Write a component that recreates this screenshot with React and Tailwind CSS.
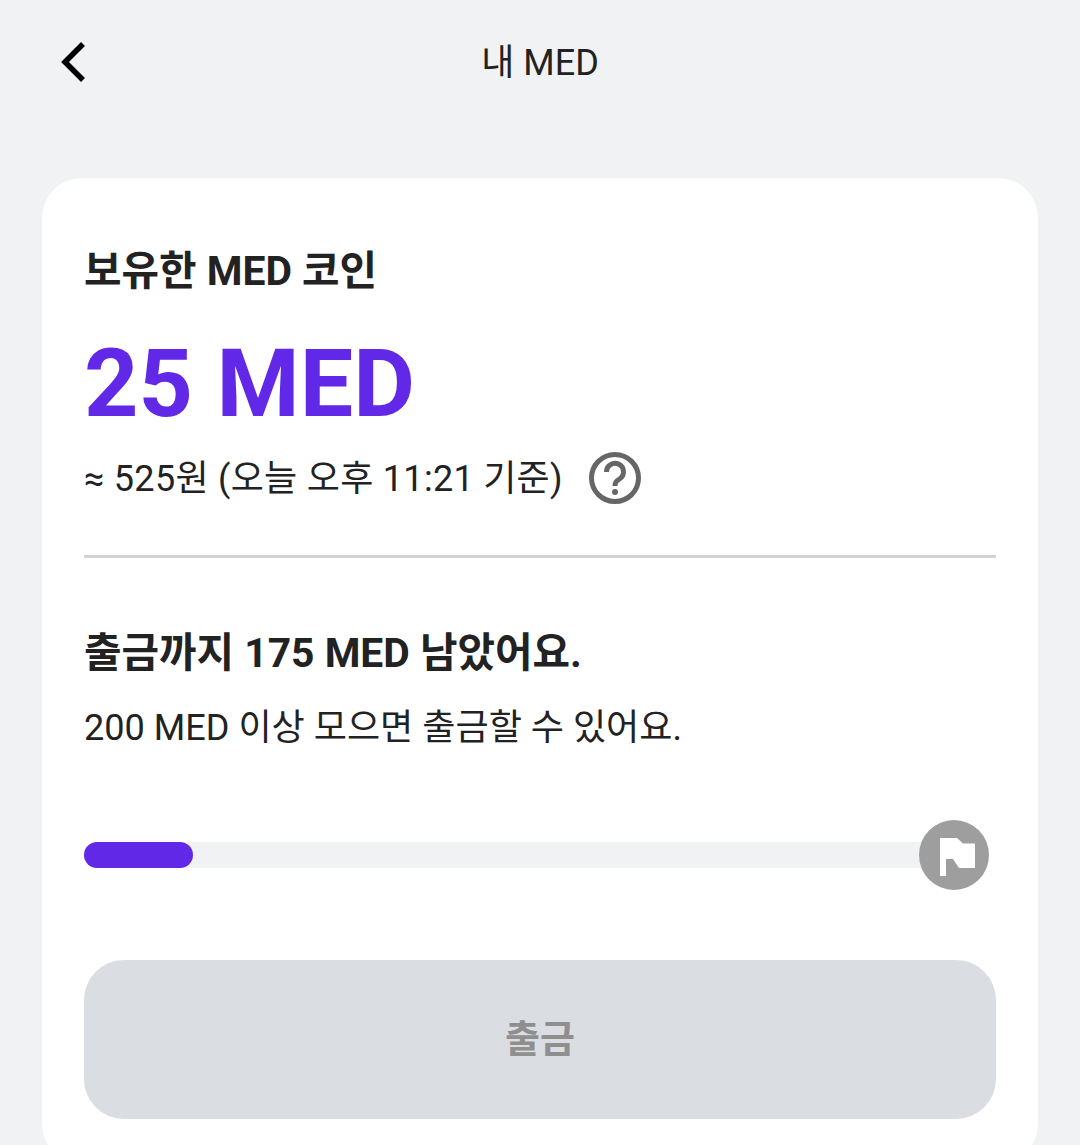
export default function App() {
  return (
    <div className="h-[1145px] overflow-hidden bg-[#f1f2f4] font-['Roboto','Noto_Sans_CJK_KR',sans-serif] text-[#222222]">
      <header className="h-[178px] relative">
        <div className="h-[126px] flex items-center justify-center text-[36px] leading-none">내 MED</div>
        <svg className="absolute left-[58px] top-[40px]" width="32" height="44" viewBox="0 0 32 44" fill="none">
          <path d="M25 4 L7 22 L25 40" stroke="#000" strokeWidth="5.5" />
        </svg>
      </header>
      <main className="mx-[42px] h-[986px] rounded-[40px] bg-white px-[42px] pt-[70px]">
        <h2 className="text-[40.8px] font-bold leading-[46px]">보유한 MED 코인</h2>
        <div className="mt-[40px] text-[95px] font-bold leading-[100px] text-[#6128e8]">25 MED</div>
        <div className="mt-[19px] flex items-center gap-[26px]">
          <span className="text-[36px] tracking-[0.3px] leading-[52px]">≈ 525원 (오늘 오후 11:21 기준)</span>
          <svg className="-translate-y-[1px]" width="52" height="52" viewBox="0 0 52 52" fill="none">
            <circle cx="26" cy="26" r="23.5" stroke="#666" strokeWidth="5" />
            <path d="M17.5 20 a8.5 8.5 0 1 1 13 7 c-3 2 -4.5 3 -4.5 7" stroke="#666" strokeWidth="5" />
            <circle cx="26" cy="40" r="3" fill="#666" />
          </svg>
        </div>
        <div className="mt-[50px] h-[3px] bg-[#d2d3d5]" />
        <h3 className="mt-[72px] text-[40.8px] font-bold leading-[46px]">출금까지 175 MED 남았어요.</h3>
        <p className="mt-[29px] text-[36.1px] leading-[46px]">200 MED 이상 모으면 출금할 수 있어요.</p>
        <div className="relative mt-[91px] h-[26px] w-[870px] rounded-full bg-[#f1f2f4]">
          <div className="h-full w-[109px] rounded-full bg-[#6128e8]" />
          <div className="absolute right-0 top-[-22px] flex h-[70px] w-[70px] translate-x-[35px] items-center justify-center rounded-full bg-[#9e9e9e]">
            <svg className="translate-x-[3px] translate-y-[2px]" width="35" height="38" viewBox="0 0 35 38"><path d="M0 0 H17 L23 5.5 H35 V30 H19 L13 21 H6 V38 H0 Z" fill="#fff" /></svg>
          </div>
        </div>
        <button className="mt-[92px] flex h-[159px] w-full items-center justify-center rounded-[40px] bg-[#dadde2] text-[38px] font-bold text-[#8f8f8f]">출금</button>
      </main>
    </div>
  );
}
